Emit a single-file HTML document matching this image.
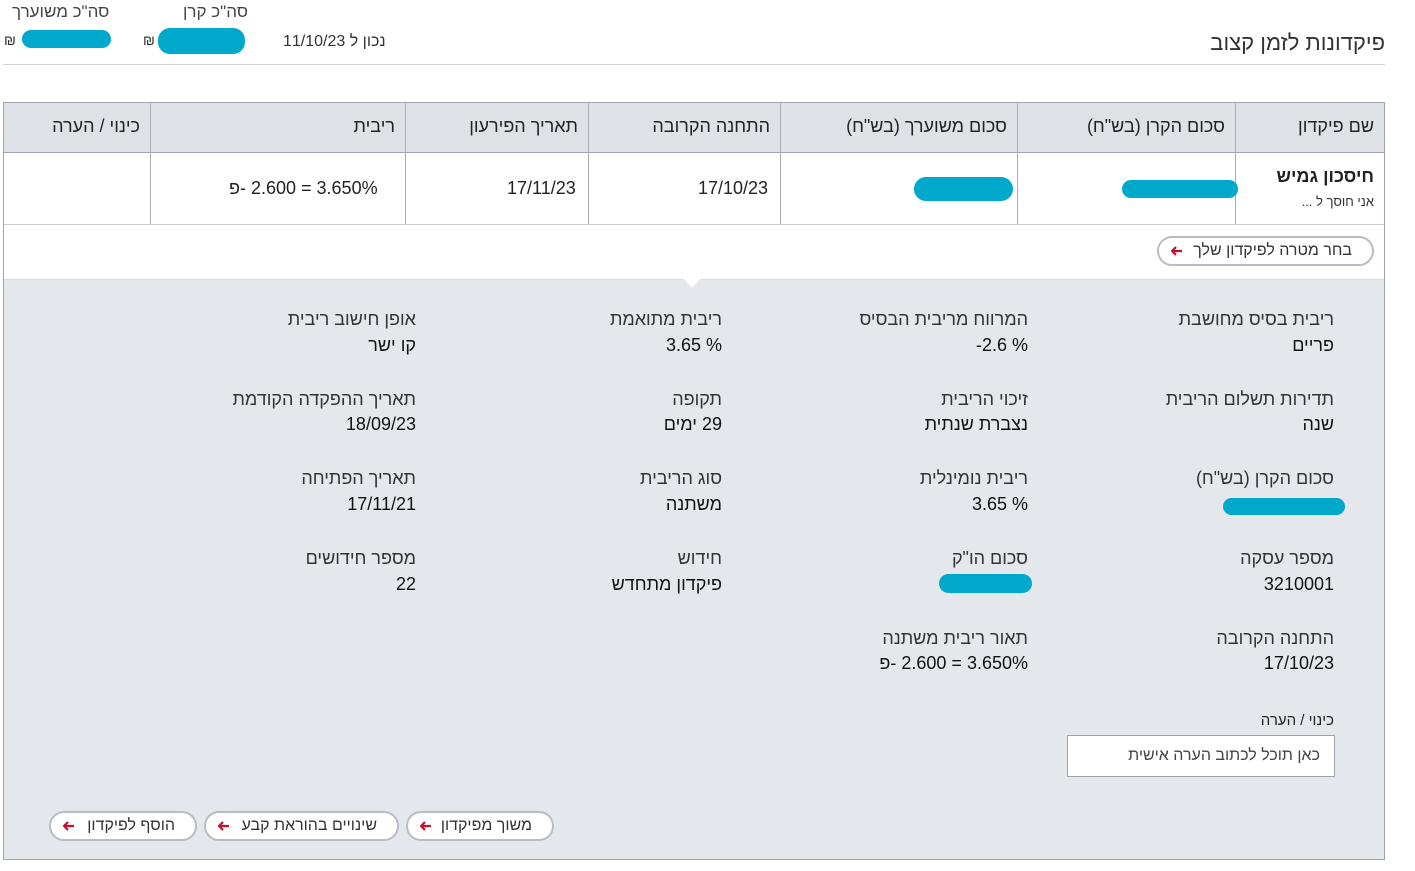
<!DOCTYPE html>
<html><head><meta charset="utf-8"><style>
body{margin:0;width:1415px;height:871px;background:#fff;font-family:"Liberation Sans","Noto Sans CJK SC",sans-serif;color:#222;position:relative;overflow:hidden}
.a{position:absolute;white-space:nowrap}
.r{direction:rtl;text-align:right}
.l{direction:ltr;unicode-bidi:isolate}
.blob{position:absolute;background:#00a9cc;border-radius:12px}
.lbl{font-size:18px;color:#333}
.val{font-size:18px;color:#111}
.btn{position:absolute;height:30px;border:2px solid #b9bcc6;border-radius:16px;background:#fff;font-size:16px;color:#333;box-sizing:border-box;direction:rtl;line-height:26px;padding-right:20px}
.btn svg{position:absolute;left:12px;top:8px}
</style></head><body>
<div class="a" style="left:12px;top:2px;font-size:17px;color:#444">סה"כ משוערך</div>
<div class="a" style="left:183px;top:2px;font-size:17px;color:#444">סה"כ קרן</div>
<div class="a" style="left:4px;top:32px;font-size:14px;color:#333">₪</div>
<div class="blob" style="left:22px;top:30px;width:89px;height:18px"></div>
<div class="a" style="left:143px;top:32px;font-size:14px;color:#333">₪</div>
<div class="blob" style="left:158px;top:28px;width:87px;height:26px"></div>
<div class="a" style="left:283px;top:33px;font-size:16px;color:#333"><span class="l">11/10/23</span> <span dir="rtl">נכון ל</span></div>
<div class="a r" style="right:30px;top:30px;font-size:22px;color:#333">פיקדונות לזמן קצוב</div>
<div class="a" style="left:3px;top:64px;width:1382px;height:1px;background:#d0d3d8"></div>

<div class="a" style="left:3px;top:102px;width:1382px;height:758px;border:1px solid #9ea3ae;box-sizing:border-box;background:#e4e7eb"></div>
<div class="a" style="left:4px;top:103px;width:1380px;height:49px;background:#dee1e5;border-bottom:1px solid #9ea3ae"></div>
<div class="a" style="left:4px;top:153px;width:1380px;height:71px;background:#fff;border-bottom:1px solid #ccc"></div>
<div class="a" style="left:4px;top:225px;width:1380px;height:54px;background:#fff;border-bottom:1px solid #d6d9de"></div>
<div class="a" style="left:686px;top:273px;width:12px;height:12px;background:#fff;transform:rotate(45deg)"></div>
<div class="a" style="left:150px;top:103px;width:1px;height:121px;background:#a9adb7"></div>
<div class="a" style="left:405px;top:103px;width:1px;height:121px;background:#a9adb7"></div>
<div class="a" style="left:588px;top:103px;width:1px;height:121px;background:#a9adb7"></div>
<div class="a" style="left:780px;top:103px;width:1px;height:121px;background:#a9adb7"></div>
<div class="a" style="left:1017px;top:103px;width:1px;height:121px;background:#a9adb7"></div>
<div class="a" style="left:1235px;top:103px;width:1px;height:121px;background:#a9adb7"></div>

<div class="a r" style="right:41px;top:116px;font-size:18px">שם פיקדון</div>
<div class="a r" style="right:190px;top:116px;font-size:18px">סכום הקרן (בש"ח)</div>
<div class="a r" style="right:408px;top:116px;font-size:18px">סכום משוערך (בש"ח)</div>
<div class="a r" style="right:645px;top:116px;font-size:18px">התחנה הקרובה</div>
<div class="a r" style="right:837px;top:116px;font-size:18px">תאריך הפירעון</div>
<div class="a r" style="right:1020px;top:116px;font-size:18px">ריבית</div>
<div class="a r" style="right:1275px;top:116px;font-size:18px">כינוי / הערה</div>

<div class="a r" style="right:41px;top:166px;font-size:18px;font-weight:bold">חיסכון גמיש</div>
<div class="a r" style="right:41px;top:194px;font-size:13px;color:#333">אני חוסך ל ...</div>
<div class="blob" style="left:1122px;top:180px;width:116px;height:18px"></div>
<div class="blob" style="left:914px;top:177px;width:99px;height:24px"></div>
<div class="a" style="left:698px;top:178px;font-size:18px">17/10/23</div>
<div class="a" style="left:507px;top:178px;font-size:18px">17/11/23</div>
<div class="a" style="left:229px;top:178px;font-size:18px"><span dir="rtl">פ</span>- 2.600 = 3.650%</div>

<div class="btn" style="left:1157px;top:236px;width:217px">בחר מטרה לפיקדון שלך<svg width="12" height="10" viewBox="0 0 12 10"><path d="M11 5H2M5 1L1 5l4 4" stroke="#c8102e" stroke-width="2.2" fill="none"/></svg></div>

<div class="a r lbl" style="right:81px;top:309px">ריבית בסיס מחושבת</div><div class="a r val" style="right:81px;top:335px">פריים</div>
<div class="a r lbl" style="right:387px;top:309px">המרווח מריבית הבסיס</div><div class="a val" style="right:387px;top:335px">-2.6 %</div>
<div class="a r lbl" style="right:693px;top:309px">ריבית מתואמת</div><div class="a val" style="right:693px;top:335px">3.65 %</div>
<div class="a r lbl" style="right:999px;top:309px">אופן חישוב ריבית</div><div class="a r val" style="right:999px;top:335px">קו ישר</div>

<div class="a r lbl" style="right:81px;top:389px">תדירות תשלום הריבית</div><div class="a r val" style="right:81px;top:414px">שנה</div>
<div class="a r lbl" style="right:387px;top:389px">זיכוי הריבית</div><div class="a r val" style="right:387px;top:414px">נצברת שנתית</div>
<div class="a r lbl" style="right:693px;top:389px">תקופה</div><div class="a r val" style="right:693px;top:414px">29 ימים</div>
<div class="a r lbl" style="right:999px;top:389px">תאריך ההפקדה הקודמת</div><div class="a val" style="right:999px;top:414px">18/09/23</div>

<div class="a r lbl" style="right:81px;top:468px">סכום הקרן (בש"ח)</div><div class="blob" style="left:1223px;top:498px;width:122px;height:17px"></div>
<div class="a r lbl" style="right:387px;top:468px">ריבית נומינלית</div><div class="a val" style="right:387px;top:494px">3.65 %</div>
<div class="a r lbl" style="right:693px;top:468px">סוג הריבית</div><div class="a r val" style="right:693px;top:494px">משתנה</div>
<div class="a r lbl" style="right:999px;top:468px">תאריך הפתיחה</div><div class="a val" style="right:999px;top:494px">17/11/21</div>

<div class="a r lbl" style="right:81px;top:548px">מספר עסקה</div><div class="a val" style="right:81px;top:574px">3210001</div>
<div class="a r lbl" style="right:387px;top:548px">סכום הו"ק</div><div class="blob" style="left:939px;top:574px;width:93px;height:19px"></div>
<div class="a r lbl" style="right:693px;top:548px">חידוש</div><div class="a r val" style="right:693px;top:574px">פיקדון מתחדש</div>
<div class="a r lbl" style="right:999px;top:548px">מספר חידושים</div><div class="a val" style="right:999px;top:574px">22</div>

<div class="a r lbl" style="right:81px;top:628px">התחנה הקרובה</div><div class="a val" style="right:81px;top:653px">17/10/23</div>
<div class="a r lbl" style="right:387px;top:628px">תאור ריבית משתנה</div><div class="a val" style="right:387px;top:653px"><span dir="rtl">פ</span>- 2.600 = 3.650%</div>

<div class="a r" style="right:81px;top:712px;font-size:15px">כינוי / הערה</div>
<div class="a r" style="left:1067px;top:735px;width:268px;height:42px;box-sizing:border-box;border:1px solid #9ea3ae;background:#fff;font-size:16px;color:#444;padding:11px 14px 0 0">כאן תוכל לכתוב הערה אישית</div>

<div class="btn" style="left:406px;top:811px;width:148px">משוך מפיקדון<svg width="12" height="10" viewBox="0 0 12 10"><path d="M11 5H2M5 1L1 5l4 4" stroke="#c8102e" stroke-width="2.2" fill="none"/></svg></div>
<div class="btn" style="left:204px;top:811px;width:195px">שינויים בהוראת קבע<svg width="12" height="10" viewBox="0 0 12 10"><path d="M11 5H2M5 1L1 5l4 4" stroke="#c8102e" stroke-width="2.2" fill="none"/></svg></div>
<div class="btn" style="left:49px;top:811px;width:148px">הוסף לפיקדון<svg width="12" height="10" viewBox="0 0 12 10"><path d="M11 5H2M5 1L1 5l4 4" stroke="#c8102e" stroke-width="2.2" fill="none"/></svg></div>
</body></html>
